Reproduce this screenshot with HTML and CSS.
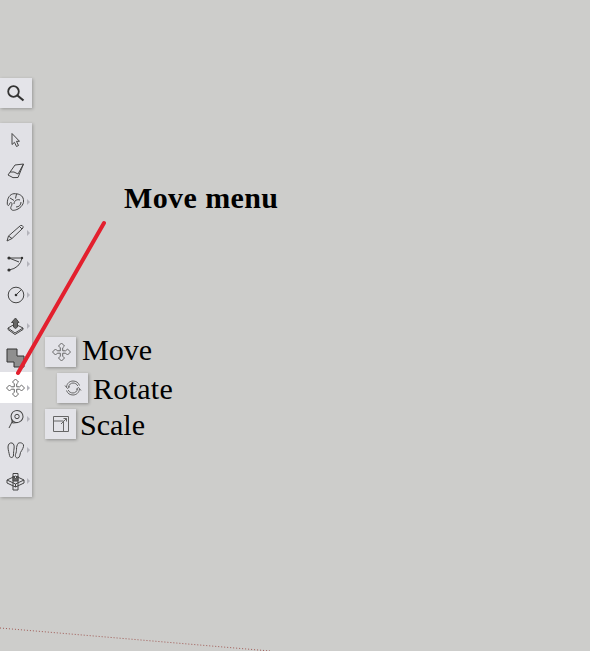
FILE: index.html
```html
<!DOCTYPE html>
<html lang="en">
<head>
    <meta charset="UTF-8">
    <meta name="viewport" content="width=device-width, initial-scale=1.0">
    <link rel="stylesheet" href="styles.css">
    <title>Move menu</title>
</head>
<body>

<div class="side">
    <div class="search-box">
        <svg class="icon" viewBox="0 0 20 20"><circle cx="8.500" cy="8.500" r="5.300" stroke-width="1.800"/><path d="M12.500 12.500L18.500 17.500" stroke-width="2.200"/></svg>
    </div>

    <div class="toolbar">
        <div class="tool">
            <svg class="icon" viewBox="0 0 20 20"><path d="M7 3.500V14.500L9.500 12.300L11.500 16.500L13.500 15.500L11.500 11.300H14.500Z"/></svg>
        </div>
        <div class="tool">
            <svg class="icon" viewBox="0 0 20 20"><path d="M3 14L10 4L18.500 3L13 16.500Q8 18 3 14ZM5 11Q9 10 13 13L18.500 3"/></svg>
        </div>
        <div class="tool more">
            <svg class="icon" viewBox="0 0 20 20"><path d="M2.300 12C2 6 5 2 9 1.700C13 1.500 17 3 18 6C19.500 10 18 14 13 17C10 18.500 7 19 6 17C5 15 7 14 7 12C7 10 5 10 4.500 12C4 14 2.500 14 2.300 12Z"/><path d="M9 12C9 8.500 12 7 15 8M11 15C14 15 16 13 16 10"/><path d="M5 6L9 8.500M11.500 2L10.500 6.500"/></svg>
        </div>
        <div class="tool more">
            <svg class="icon" viewBox="0 0 20 20"><path d="M2 18L3.500 13L15.500 2.500Q17.500 2 18 3.500V5L7 15.500ZM3.500 13L7 15.500M14.500 3.500L17 6"/></svg>
        </div>
        <div class="tool more">
            <svg class="icon" viewBox="0 0 20 20"><path d="M4 4H17M4 4L14 8M4 16Q15 14 17 4"/><circle class="dot" cx="4" cy="4" r="1.600"/><circle class="dot" cx="4" cy="16" r="1.600"/><circle class="dot" cx="17" cy="4" r="1.200"/></svg>
        </div>
        <div class="tool more">
            <svg class="icon" viewBox="0 0 20 20"><circle cx="11" cy="10" r="7.800"/><path d="M11 10L16.500 4.500"/><circle class="dot" cx="11" cy="10" r="1.300"/></svg>
        </div>
        <div class="tool more">
            <svg class="icon" viewBox="0 0 20 20"><path d="M3 12L10 8L18 12L10 17ZM3 12V13.500L10 18.500L18 13.500V12"/><path class="dark" d="M8.500 11V6.500H6.500L10.500 2L14 6.500H12.500V11L10.500 12.500Z"/></svg>
        </div>
        <div class="tool">
            <svg class="icon" viewBox="0 0 20 20"><path class="grey" d="M2 2H12V9H19V20H9V15H2Z"/></svg>
        </div>
        <div class="tool more active">
            <svg class="icon move" viewBox="0 0 20 20"><use href="#move-arrows"/></svg>
        </div>
        <div class="tool more">
            <svg class="icon" viewBox="0 0 20 20"><path d="M4 19L7.500 12"/><circle cx="12" cy="7.500" r="6" transform="rotate(-20 12 7.500)"/><circle cx="12" cy="7.500" r="2.200"/><path d="M6.500 9.500L7.500 14L13 13.500"/></svg>
        </div>
        <div class="tool more">
            <svg class="icon" viewBox="0 0 20 20"><path d="M3 7C3 4 5 2.500 7 3C9 3.500 9.500 6 9 9C8.700 11 8.500 12.500 8.500 15C8.500 18 5 18.500 4.500 15.500C4.200 13 3 10 3 7Z"/><path d="M13 3.500C15 2 18 3 18.500 5C19 7 17 10 15.500 12.500C15 14 15 18 12.500 18C10 18 10 15 11 13C11.500 11 11.500 10 11.500 9C11.500 7 12 5 13 3.500Z"/></svg>
        </div>
        <div class="tool more">
            <svg class="icon" viewBox="0 0 20 20"><path d="M2 9L10.500 5L19 9V12L10.500 16L2 12ZM2 9L10.500 13L19 9M10.500 13V16"/><path d="M8 2.500H13V19H8Z"/><path class="dark" d="M8 5L10.500 7.500L13 5V10H8Z"/></svg>
        </div>
    </div>
</div>

<div class="flyout">
    <div class="fly-row first">
        <div class="fly-btn">
            <svg class="icon" viewBox="0 0 20 20"><use href="#move-arrows"/></svg>
        </div>
        <span class="fly-label">Move</span>
    </div>
    <div class="fly-row second">
        <div class="fly-btn">
            <svg class="icon" viewBox="0 0 20 20"><path d="M3.500 9C4 5 7 3 10 3C13 3 15.500 4.500 16.500 7.500M5.500 9C6 6.500 8 5 10 5C12 5 14 6 14.800 8M2 7.500L4.500 10.500L7 8.500M16.500 11C16 15 13 17 10 17C7 17 4.500 15.500 3.500 12.500M14.500 11C14 13.500 12 15 10 15C8 15 6 14 5.200 12M18 12.500L15.500 9.500L13 11.500"/></svg>
        </div>
        <span class="fly-label">Rotate</span>
    </div>
    <div class="fly-row third">
        <div class="fly-btn">
            <svg class="icon" viewBox="0 0 20 20"><path d="M2.500 2.500H17.500V17.500H2.500ZM2.500 7H12.500V17.500"/><path d="M10 10L15.500 4.500M15.500 4.500H12.500M15.500 4.500V7.500"/></svg>
        </div>
        <span class="fly-label">Scale</span>
    </div>
</div>

<h2 class="callout">Move menu</h2>

<svg class="overlay" viewBox="0 0 590 651">
    <defs>
        <g id="move-arrows">
            <path d="M10.500 1L13.500 4L11.700 5.800V8.800H14.700L16.500 7L19.500 10L16.500 13L14.700 11.200H11.700V14.200L13.500 16L10.500 19L7.500 16L9.300 14.200V11.200H6.300L4.500 13L1.500 10L4.500 7L6.300 8.800H9.300V5.800L7.500 4Z"/>
        </g>
    </defs>
    <path class="pointer" d="M104 223L18 373"/>
    <path class="axis" d="M0 628L270 651"/>
</svg>

</body>
</html>
```

FILE: styles.css
```css
body {
    margin: 0;
    height: 651px;
    overflow: hidden;
    background: #cdcdcb;
    display: flex;
    align-items: flex-start;
    color: #000;
    font-family: "Liberation Serif", serif;
}

.side {
    width: 32px;
    padding-top: 78px;
}

.search-box {
    height: 30px;
    display: flex;
    align-items: center;
    padding-left: 5px;
    margin-bottom: 15px;
    background: #e4e4e9;
    box-shadow: 1px 1px 3px rgba(0, 0, 0, 0.25);
}

.toolbar {
    padding: 1px 0;
    background: #e1e1e6;
    box-shadow: 1px 1px 3px rgba(0, 0, 0, 0.25);
}

.tool {
    position: relative;
    height: 31px;
    display: flex;
    align-items: center;
    padding-left: 5px;
}

.tool.active {
    background: #fff;
}

/* little grey triangle for tools that open a menu */
.tool.more::after {
    content: "";
    position: absolute;
    left: 27px;
    top: 13px;
    border-left: 3px solid #b4b4bb;
    border-top: 3px solid transparent;
    border-bottom: 3px solid transparent;
}

.icon {
    width: 20px;
    height: 20px;
    fill: none;
    stroke: #444;
    stroke-width: 1;
    stroke-linejoin: round;
    overflow: visible;
    filter: blur(0.3px);
}

.icon.move {
    stroke: #666;
}

.icon .dot {
    fill: #333;
    stroke: none;
}

.icon .dark {
    fill: #666;
}

.icon .grey {
    fill: #8f8f8f;
    stroke: #333;
}

.search-box .icon {
    stroke: #333;
}

.flyout {
    margin: 337px 0 0 13px;
    display: flex;
    flex-direction: column;
    gap: 6px;
}

.fly-row {
    height: 30px;
    display: flex;
    align-items: center;
    gap: 6px;
}

.fly-row.first .fly-label {
    margin-top: -4px;
}

.fly-row.second {
    margin-left: 12px;
    gap: 5px;
}

.fly-row.second .fly-label {
    margin-top: 2px;
    letter-spacing: 0.3px;
}

.fly-row.third {
    gap: 4px;
}

.fly-row.third .fly-label {
    margin-top: 2px;
}

.fly-btn {
    width: 31px;
    height: 30px;
    display: flex;
    align-items: center;
    justify-content: center;
    background: #e3e3e8;
    box-shadow: 1px 1px 3px rgba(0, 0, 0, 0.3);
}

.fly-btn .icon {
    stroke: #666;
}

.fly-label {
    font-size: 30px;
    line-height: 30px;
}

.callout {
    position: absolute;
    left: 124px;
    top: 180px;
    margin: 0;
    font-size: 30px;
    letter-spacing: 0.4px;
    line-height: 35px;
    font-weight: bold;
}

.overlay {
    position: absolute;
    left: 0;
    top: 0;
    width: 590px;
    height: 651px;
    pointer-events: none;
}

.pointer {
    stroke: #e3202e;
    stroke-width: 4;
    stroke-linecap: round;
}

.axis {
    stroke: #a05a55;
    stroke-width: 1;
    stroke-dasharray: 1 2;
    fill: none;
}
```
